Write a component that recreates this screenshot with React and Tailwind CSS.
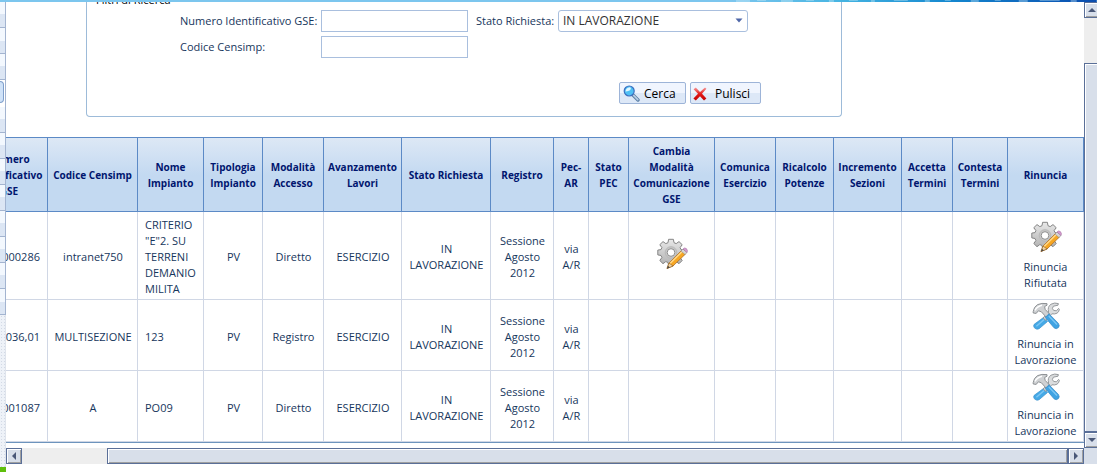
import React from 'react';

const columns = [
  { lines: ['Numero', 'Identificativo', 'GSE'], width: 77 },
  { lines: ['Codice Censimp'], width: 90 },
  { lines: ['Nome', 'Impianto'], width: 66 },
  { lines: ['Tipologia', 'Impianto'], width: 59 },
  { lines: ['Modalità', 'Accesso'], width: 61 },
  { lines: ['Avanzamento', 'Lavori'], width: 78 },
  { lines: ['Stato Richiesta'], width: 89 },
  { lines: ['Registro'], width: 63 },
  { lines: ['Pec-', 'AR'], width: 35 },
  { lines: ['Stato', 'PEC'], width: 40 },
  { lines: ['Cambia', 'Modalità', 'Comunicazione', 'GSE'], width: 86 },
  { lines: ['Comunica', 'Esercizio'], width: 61 },
  { lines: ['Ricalcolo', 'Potenze'], width: 58 },
  { lines: ['Incremento', 'Sezioni'], width: 68 },
  { lines: ['Accetta', 'Termini'], width: 51 },
  { lines: ['Contesta', 'Termini'], width: 55 },
  { lines: ['Rinuncia'], width: 76 },
];

const rows = [
  {
    id: '000286', censimp: 'intranet750', nome: ['CRITERIO', '"E"2. SU', 'TERRENI', 'DEMANIO', 'MILITA'],
    accesso: 'Diretto', cambia: true, rinuncia: ['Rinuncia', 'Rifiutata'], icon: 'gear',
  },
  {
    id: '000036,01', censimp: 'MULTISEZIONE', nome: ['123'],
    accesso: 'Registro', cambia: false, rinuncia: ['Rinuncia in', 'Lavorazione'], icon: 'tools',
  },
  {
    id: '001087', censimp: 'A', nome: ['PO09'],
    accesso: 'Diretto', cambia: false, rinuncia: ['Rinuncia in', 'Lavorazione'], icon: 'tools',
  },
];

function Lines({ items }) {
  return items.map((line) => (
    <span key={line} className="block whitespace-nowrap">{line}</span>
  ));
}

function GearIcon() {
  return (
    <svg width="32" height="32" viewBox="0 0 32 32" aria-hidden="true">
      <defs>
        <linearGradient id="gearFill" x1="0" y1="0" x2="0" y2="1">
          <stop offset="0" stopColor="#e8e8e8" />
          <stop offset="1" stopColor="#b0b0b0" />
        </linearGradient>
      </defs>
      <g transform="translate(15 14.5)" stroke="#858585" strokeWidth="1" strokeLinejoin="round">
        <path
          fill="url(#gearFill)"
          d="M-2.4-13.2H2.4L3-9.8L5.2-8.9L8-10.9L11.2-7.8L9.1-4.9L10-2.9L13.2-2.4V2.4L10 3L9.1 5L11.2 8L8 11.2L5.2 9.1L3 10L2.4 13.2H-2.4L-3 10L-5.2 9.1L-8 11.2L-11.2 8L-9.1 5L-10 3L-13.2 2.4V-2.4L-10-2.9L-9.1-4.9L-11.2-7.8L-8-10.9L-5.2-8.9L-3-9.8Z"
        />
        <circle r="5.8" fill="#c6c6c6" stroke="#b8b8b8" />
        <circle r="3.8" fill="#fff" stroke="#909090" />
      </g>
      <path d="M11 30.5L13 25L26 12L30 15.5L17 28Z" fill="#f6a623" stroke="#a8661c" strokeWidth="0.7" />
      <path d="M14 25.5L27 12.8" stroke="#ffd98a" strokeWidth="1.5" />
      <path d="M11 30.5L13 25L17 28Z" fill="#f0d3a4" stroke="#8a5a20" strokeWidth="0.6" />
      <path d="M11 30.5L12 27.8L13.8 29.4Z" fill="#444" />
      <path d="M25 13L27 11L31 14.6L29 16.6Z" fill="#d5d5d5" stroke="#888" strokeWidth="0.5" />
      <path d="M27 11Q28.5 9 30.4 10.6Q32.2 12.6 31 14.6Z" fill="#d59bd0" stroke="#9b6799" strokeWidth="0.5" />
    </svg>
  );
}

function ToolsIcon() {
  return (
    <svg width="28" height="28" viewBox="0 0 28 28" aria-hidden="true">
      <path d="M11.5 15.5L15.5 19.5L7 26.8Q4.8 28 2.6 26.1Q.8 24 2.2 22.3Z" fill="#45a9e6" stroke="#3a8fcc" strokeWidth="0.7" />
      <path d="M11 16L16.6 10Q15.2 4.6 19 2.2Q22.6.2 26.4 1.6L26 3.2L21.4 4.2L20.4 6.4L21.6 8.4L24.4 8.8L26.6 6.4L27.4 7.4Q27 10 25 11.2Q22.6 12.4 19.8 11.8L14 18.4Z" fill="#dadcdd" stroke="#8d9194" strokeWidth="0.9" />
      <path d="M1.2 9.5Q1.8 4.8 5.6 2.6Q9.8.8 15 1.6V3.2L12.6 4.6L13.2 7.4L17.6 12L14.2 15.2L9.4 9.8L6.4 8.8L4.2 11.4L1.2 11Z" fill="#cfd1d3" stroke="#85898c" strokeWidth="0.9" />
      <path d="M3 8.4Q5 4.2 10 3.2" stroke="#fff" strokeWidth="1.4" fill="none" />
      <path d="M13.2 15.4L17 11.8L26.4 21.4Q28 23.6 26.4 25.6Q24.4 27.6 22 25.8Z" fill="#3fa3e3" stroke="#3588c4" strokeWidth="0.7" />
      <path d="M16.8 14L25 22.4M12 17.6L4.4 24.2" stroke="#7cc6f4" strokeWidth="1.4" />
    </svg>
  );
}

function SearchIcon() {
  return (
    <svg width="17" height="17" viewBox="0 0 17 17" aria-hidden="true">
      <path d="M10 10L15 15" stroke="#5b7fa6" strokeWidth="3.4" strokeLinecap="round" />
      <path d="M10.6 10.4L14.8 14.6" stroke="#b9cfe4" strokeWidth="1.6" strokeLinecap="round" />
      <circle cx="6.2" cy="6" r="5" fill="#4fc0f4" stroke="#3a6fc0" strokeWidth="1.2" />
      <path d="M2.6 6.4Q2.8 2.6 6.8 2.2Q9 3.2 6.6 5.4Q4 6.4 2.6 6.4Z" fill="#e2f7ff" />
    </svg>
  );
}

function ClearIcon() {
  return (
    <svg width="14" height="14" viewBox="0 0 14 14" aria-hidden="true">
      <defs>
        <linearGradient id="clearFill" x1="0" y1="0" x2="0" y2="1">
          <stop offset="0" stopColor="#f79a9a" />
          <stop offset="0.5" stopColor="#e31818" />
          <stop offset="1" stopColor="#c00000" />
        </linearGradient>
      </defs>
      <path d="M.6 2.2L2.8.6L7 5L12 .4L13.4 1.8L9 6.8L13.4 11.4L11 13.6L7 9.2L2.8 13.6L.4 11.4L5 6.8Z" fill="url(#clearFill)" />
    </svg>
  );
}

function ScrollButton({ label, points }) {
  return (
    <button
      type="button"
      aria-label={label}
      className="flex size-4 shrink-0 items-center justify-center border border-[#5a6f98] bg-[#d8dfea] shadow-[inset_1px_1px_0_#fff,inset_-1px_-1px_0_#a0a0a0]"
    >
      <svg width="8" height="8" viewBox="0 0 8 8" aria-hidden="true">
        <polygon points={points} fill="#4a5878" />
      </svg>
    </button>
  );
}

function Banner() {
  return (
    <div className="flex h-[2px] shrink-0 bg-[#7cc6ee]">
      <div className="w-2/3" />
      <svg className="h-full flex-1" viewBox="0 0 366 2" preserveAspectRatio="none" aria-hidden="true">
        <defs>
          <linearGradient id="sea">
            <stop offset="0" stopColor="#7cc6ee" />
            <stop offset="0.3" stopColor="#45b4e2" />
            <stop offset="0.6" stopColor="#1487cf" />
            <stop offset="1" stopColor="#0a4cae" />
          </linearGradient>
        </defs>
        <rect width="366" height="2" fill="url(#sea)" />
        <path d="M5 1h14M26 0h9M50 1h12M75 0h8M98 1h5M118 0h9M140 1h4M163 0h14M194 1h5M214 0h6M240 1h8M264 0h6M288 1h9M309 0h20M340 1h6" stroke="#d4f0fa" strokeOpacity="0.75" strokeWidth="1" />
      </svg>
    </div>
  );
}

function Sidebar() {
  return (
    <div className="flex w-[6px] shrink-0 flex-col bg-[#eef2f8]">
      {Array.from({ length: 12 }, (_, i) => (
        i === 3 ? (
          <div key={i} className="h-[27px] shrink-0 border-r border-[#a3b4d0] bg-white py-px pr-px">
            <div className="h-[22px] rounded-r-sm border border-l-0 border-[#7f9fcb] bg-[#cfe2f8]" />
          </div>
        ) : (
          <div key={i} className="h-[26px] shrink-0 border-r border-b border-[#a3b4d0] bg-linear-to-b from-[#f3f8fe] from-50% to-[#dce6f4] to-50%" />
        )
      ))}
      <div className="flex-1 border-r border-[#dfe4ec] bg-[radial-gradient(#d3dae6_1px,transparent_1px)] bg-[size:3px_3px]" />
      <div className="h-[5px] shrink-0 bg-[#5fbf0c]" />
    </div>
  );
}

function SearchForm() {
  return (
    <form className="ml-20 h-[115px] w-[756px] shrink-0 rounded-b border border-t-0 border-[#9dbbd9] text-[11px] text-[#16365c]">
      <div className="h-2 overflow-hidden">
        <div className="-mt-[10px] pl-[9px] leading-4 text-black">Filtri di Ricerca</div>
      </div>
      <div className="ml-[93px] grid grid-cols-[141px_147px_auto] gap-y-1">
        <label htmlFor="gse" className="flex items-center">Numero Identificativo GSE:</label>
        <input id="gse" type="text" className="h-[22px] w-full border border-[#a9bfde]" />
        <div className="flex items-center pl-2">
          <label htmlFor="stato" className="w-[82px] whitespace-nowrap">Stato Richiesta:</label>
          <div className="relative">
            <select id="stato" className="block h-[22px] w-[190px] appearance-none rounded-[3px] border border-[#a9bfde] bg-white px-1 text-xs text-[#333]">
              <option>IN LAVORAZIONE</option>
            </select>
            <svg className="pointer-events-none absolute top-2 right-[5px]" width="8" height="5" viewBox="0 0 8 5" aria-hidden="true">
              <polygon points="0.5,0.5 7.5,0.5 4,4.5" fill="#4f67a8" />
            </svg>
          </div>
        </div>
        <label htmlFor="censimp" className="flex items-center">Codice Censimp:</label>
        <input id="censimp" type="text" className="h-[22px] w-full border border-[#a9bfde]" />
      </div>
      <div className="mt-6 flex justify-end gap-1 pr-20 text-xs text-black">
        <button type="button" className="flex h-[22px] w-[67px] items-center gap-1 rounded-xs border border-[#9db4d8] bg-linear-to-b from-[#f0f5fe] from-50% to-[#dde8f7] to-50% pt-px pl-[3px]">
          <SearchIcon />
          Cerca
        </button>
        <button type="button" className="flex h-[22px] w-[71px] items-center gap-2 rounded-xs border border-[#9db4d8] bg-linear-to-b from-[#f0f5fe] from-50% to-[#dde8f7] to-50% pt-px pl-[2px]">
          <ClearIcon />
          Pulisci
        </button>
      </div>
    </form>
  );
}

const textCell = 'border border-t-0 border-[#d0d7e5] pt-[5px] pr-0 pb-[2px] pl-px';
const iconCell = 'border border-t-0 border-[#d0d7e5] px-0 py-px';

function RequestsTable() {
  return (
    <div className="-ml-9 border-b border-[#6d94bd] pr-px">
      <table className="w-full table-fixed border-collapse text-center text-[11px] leading-4 text-[#16365c]">
        <colgroup>
          {columns.map((col, idx) => (
            <col key={idx} style={{ width: col.width }} />
          ))}
        </colgroup>
        <thead>
          <tr className="h-[74px] bg-linear-to-b from-[#dde8f5] to-[#c3d9f1] to-50% text-[10px] text-[#00156e]">
            {columns.map((col, idx) => (
              <th key={idx} className="border border-[#5c8ac6] p-0 font-bold">
                <div className="flex flex-col items-center"><Lines items={col.lines} /></div>
              </th>
            ))}
          </tr>
        </thead>
        <tbody>
          {rows.map((row) => (
            <tr key={row.id} className="h-[71px]">
              <td className={textCell}><div className="flex justify-end pr-[7px]">{row.id}</div></td>
              <td className={textCell}>{row.censimp}</td>
              <td className={textCell}><div className="pl-[6px] text-left"><Lines items={row.nome} /></div></td>
              <td className={textCell}>PV</td>
              <td className={textCell}>{row.accesso}</td>
              <td className={textCell}>ESERCIZIO</td>
              <td className={textCell}><Lines items={['IN', 'LAVORAZIONE']} /></td>
              <td className={textCell}><Lines items={['Sessione', 'Agosto', '2012']} /></td>
              <td className={textCell}><Lines items={['via', 'A/R']} /></td>
              <td className={textCell} />
              <td className={iconCell}>
                {row.cambia && <button type="button" aria-label="Cambia Modalità"><GearIcon /></button>}
              </td>
              <td className={textCell} />
              <td className={textCell} />
              <td className={textCell} />
              <td className={textCell} />
              <td className={textCell} />
              <td className={iconCell}>
                <button type="button" className="flex w-full flex-col items-center gap-1.5">
                  {row.icon === 'gear' ? <GearIcon /> : <ToolsIcon />}
                  <span><Lines items={row.rinuncia} /></span>
                </button>
              </td>
            </tr>
          ))}
        </tbody>
      </table>
    </div>
  );
}

export default function App() {
  return (
    <div className="flex h-screen flex-col overflow-hidden bg-white font-['Open_Sans','Noto_Sans',sans-serif]">
      <Banner />
      <div className="flex min-h-0 flex-1">
        <Sidebar />

        <div className="flex min-w-0 flex-1 flex-col">
          <div className="flex min-h-0">
            <main className="min-w-0 flex-1 overflow-hidden pb-[5px]">
              <SearchForm />
              <div className="h-5" />
              <RequestsTable />
            </main>

            {/* Vertical scrollbar */}
            <div className="flex w-[13px] shrink-0 flex-col overflow-hidden bg-[#eeeeee]">
              <ScrollButton label="Scorri su" points="0,6 8,6 4,2" />
              <div className="h-[45px] shrink-0" />
              <div className="w-4 flex-1 border border-[#5a6f98] bg-[#d8dfea] shadow-[inset_1px_1px_0_#fff]" />
              <ScrollButton label="Scorri giù" points="0,2 8,2 4,6" />
            </div>
          </div>

          {/* Horizontal scrollbar */}
          <div className="flex bg-[#d8dfea]">
            <div className="flex min-w-0 flex-1 bg-[#eeeeee]">
              <ScrollButton label="Scorri a sinistra" points="6,0 6,8 2,4" />
              <div className="w-[85px] shrink-0" />
              <div className="h-4 flex-1 border border-[#5a6f98] bg-[#d8dfea] shadow-[inset_1px_1px_0_#fff,inset_-1px_-1px_0_#a0a0a0]" />
              <ScrollButton label="Scorri a destra" points="2,0 2,8 6,4" />
            </div>
            <div className="w-[13px] shrink-0" />
          </div>
        </div>
      </div>
    </div>
  );
}
